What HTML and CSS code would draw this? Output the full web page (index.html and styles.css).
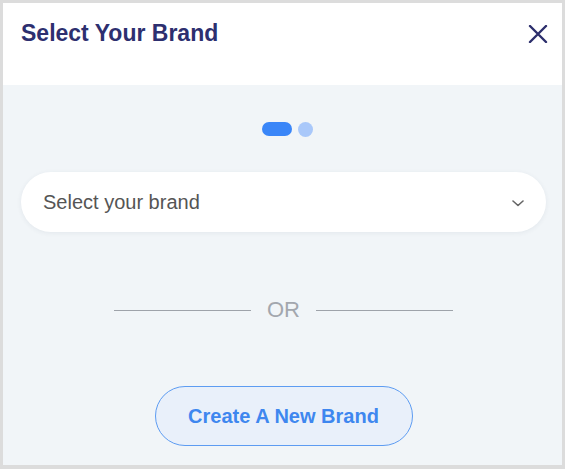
FILE: index.html
```html
<!DOCTYPE html>
<html>
<head>
<meta charset="utf-8">
<link rel="stylesheet" href="styles.css">
</head>
<body>
<div class="frame">
  <header class="header">
    <h1 class="title">Select Your Brand</h1>
    <button class="close" aria-label="Close">
      <svg width="20" height="18" viewBox="0 0 20 18"><path d="M2 1 L18 17 M18 1 L2 17" stroke="#2c2e6c" stroke-width="2.4" stroke-linecap="round" fill="none"/></svg>
    </button>
  </header>
  <main class="content">
    <div class="steps">
      <span class="step step-active"></span>
      <span class="step"></span>
    </div>
    <div class="select">
      <span class="select-text">Select your brand</span>
      <svg class="chevron" width="12" height="7" viewBox="0 0 12 7"><path d="M1 1 L6 5.5 L11 1" stroke="#666" stroke-width="1.6" stroke-linecap="round" stroke-linejoin="round" fill="none"/></svg>
    </div>
    <div class="divider">
      <span class="line"></span>
      <span class="or">OR</span>
      <span class="line"></span>
    </div>
    <button class="create">Create A New Brand</button>
  </main>
</div>
</body>
</html>
```

FILE: styles.css
```css
* { box-sizing: border-box; }
html, body { margin: 0; padding: 0; }
body {
  width: 565px;
  height: 469px;
  font-family: "Liberation Sans", Arial, sans-serif;
  background: #dcdcdc;
}
.frame {
  width: 565px;
  height: 469px;
  border: 3px solid #dcdcdc;
  border-bottom-width: 4px;
  display: flex;
  flex-direction: column;
  background: #f1f5f8;
}
.header {
  height: 82px;
  background: #ffffff;
  display: flex;
  align-items: flex-start;
  justify-content: space-between;
  padding: 17px 14px 0 18px;
}
.title {
  margin: 0;
  font-size: 23px;
  line-height: 26px;
  font-weight: bold;
  color: #2d2f6f;
}
.close {
  margin-top: 5px;
  padding: 0;
  border: 0;
  background: none;
  width: 20px;
  height: 18px;
  display: block;
}
.close svg { display: block; }
.content {
  flex: 1;
  display: flex;
  flex-direction: column;
  align-items: center;
  padding: 37px 16px 0 18px;
}
.steps {
  display: flex;
  gap: 6px;
  height: 14px;
  margin-left: 8px;
}
.step {
  width: 15px;
  height: 15px;
  border-radius: 50%;
  background: #a9c8fa;
}
.step-active {
  width: 30px;
  height: 14px;
  border-radius: 7px;
  background: #3a86f8;
}
.select {
  margin-top: 36px;
  width: 100%;
  height: 60px;
  border-radius: 30px;
  background: #ffffff;
  box-shadow: 0 1px 5px rgba(40, 60, 90, 0.07);
  display: flex;
  align-items: center;
  justify-content: space-between;
  padding: 0 22px 0 22px;
}
.select-text {
  font-size: 20px;
  color: #555555;
}
.chevron { display: block; margin-top: 2px; }
.divider {
  margin-top: 65px;
  height: 26px;
  display: flex;
  align-items: center;
  gap: 16px;
}
.line {
  width: 137px;
  height: 1px;
  background: #9ea3aa;
  margin-top: 1px;
}
.or {
  font-size: 22px;
  color: #a3a7ae;
  line-height: 26px;
}
.create {
  margin-top: 63px;
  width: 258px;
  height: 60px;
  border-radius: 30px;
  border: 1px solid #5d9cf2;
  background: #e9f0fa;
  color: #3e87ef;
  font-family: "Liberation Sans", Arial, sans-serif;
  font-size: 20px;
  font-weight: bold;
  padding: 0;
}
```
